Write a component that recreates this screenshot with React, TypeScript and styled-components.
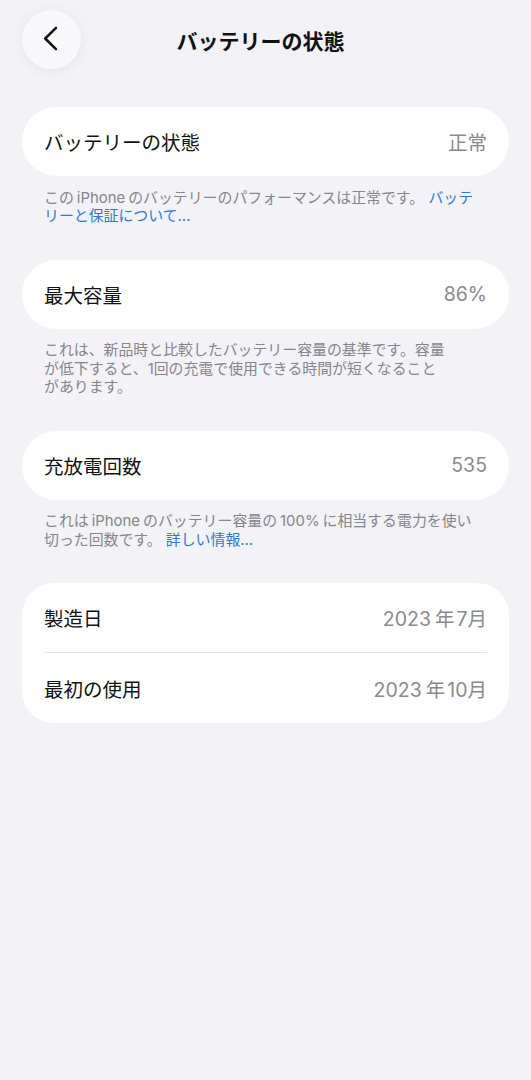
import React from 'react';
import styled, { createGlobalStyle } from 'styled-components';

const GlobalStyle = createGlobalStyle`
  html, body {
    margin: 0;
    padding: 0;
    background: #f2f2f7;
  }
  body {
    font-family: Inter, "Noto Sans CJK JP", "Noto Sans", sans-serif;
    -webkit-font-smoothing: antialiased;
  }
`;

interface IDateRow {
  label: string;
  year: string;
  month: string;
}

const dateRows: IDateRow[] = [
  { label: '製造日', year: '2023', month: '7月' },
  { label: '最初の使用', year: '2023', month: '10月' },
];

function App() {
  return (
    <>
      <GlobalStyle />
      <Page>
        <Header>
          <BackButton aria-label="戻る">
            <svg width="15" height="25" viewBox="0 0 15 25" fill="none">
              <path
                d="M13 1.8L2.2 12.5 13 23.2"
                stroke="#111"
                strokeWidth="2.5"
                strokeLinecap="round"
                strokeLinejoin="round"
              />
            </svg>
          </BackButton>
          <Title>バッテリーの状態</Title>
        </Header>

        <Section>
          <Card>
            <Row>
              <Label>バッテリーの状態</Label>
              <Value>正常</Value>
            </Row>
          </Card>
          <Footer>
            この<Latin>iPhone</Latin>のバッテリーのパフォーマンスは正常です。{' '}
            <Link>
              バッテ
              <br />
              リーと保証について...
            </Link>
          </Footer>
        </Section>

        <Section>
          <Card>
            <Row>
              <Label>最大容量</Label>
              <Value>86%</Value>
            </Row>
          </Card>
          <Footer>
            これは、新品時と比較したバッテリー容量の基準です。容量
            <br />
            が低下すると、1回の充電で使用できる時間が短くなること
            <br />
            があります。
          </Footer>
        </Section>

        <Section>
          <Card>
            <Row>
              <Label>充放電回数</Label>
              <Value>535</Value>
            </Row>
          </Card>
          <Footer>
            これは<Latin>iPhone</Latin>のバッテリー容量の<Latin>100%</Latin>に相当する電力を使い
            <br />
            切った回数です。 <Link>詳しい情報...</Link>
          </Footer>
        </Section>

        <Section>
          <Card grouped>
            {dateRows.map((row, i) => (
              <Row key={row.label} divided={i > 0}>
                <Label>{row.label}</Label>
                <Value>
                  {row.year}
                  <Kanji>年</Kanji>
                  {row.month}
                </Value>
              </Row>
            ))}
          </Card>
        </Section>
      </Page>
    </>
  );
}
export default App;

const Page = styled.div`
  width: 531px;
  min-height: 1080px;
  box-sizing: border-box;
  padding: 10px 22px 40px;
  background: #f2f2f7;
`;

const Header = styled.div`
  position: relative;
  display: flex;
  align-items: center;
  justify-content: center;
  height: 59px;
  margin-bottom: 38px;
  padding-right: 10px;
`;

const BackButton = styled.button`
  position: absolute;
  left: 0;
  top: 0;
  width: 59px;
  height: 59px;
  border: none;
  border-radius: 50%;
  background: #f9f9fc;
  box-shadow: 0 2px 14px rgba(0, 0, 0, 0.06);
  display: flex;
  align-items: center;
  justify-content: center;
  padding: 0 3px 2px 0;
`;

const Title = styled.h1`
  margin: 0;
  font-size: 21px;
  font-weight: 700;
  color: #111;
`;

const Section = styled.section`
  margin-bottom: 34px;
`;

const Card = styled.div<{ grouped?: boolean }>`
  background: #ffffff;
  border-radius: ${({ grouped }) => (grouped ? '32px' : '35px')};
  padding: 0 22px;
`;

const Row = styled.div<{ divided?: boolean }>`
  display: flex;
  justify-content: space-between;
  align-items: center;
  height: 69px;
  border-top: ${({ divided }) => (divided ? '1px solid #e3e3e8' : 'none')};
  box-sizing: border-box;
  & + & {
    height: 71px;
  }
`;

const Label = styled.span`
  font-size: 19.5px;
  color: #111;
`;

const Value = styled.span`
  font-size: 19.5px;
  color: #8a8a8e;
  display: flex;
  align-items: baseline;
`;

const Kanji = styled.span`
  margin: 0 2px 0 4px;
`;

const Footer = styled.p`
  margin: 12.5px 0 0;
  padding: 0 22px;
  font-size: 14.9px;
  line-height: 18.5px;
  color: #86868b;
  white-space: nowrap;
`;

const Latin = styled.span`
  margin: 0 3px;
`;

const Link = styled.span`
  color: #2f7ad6;
`;
